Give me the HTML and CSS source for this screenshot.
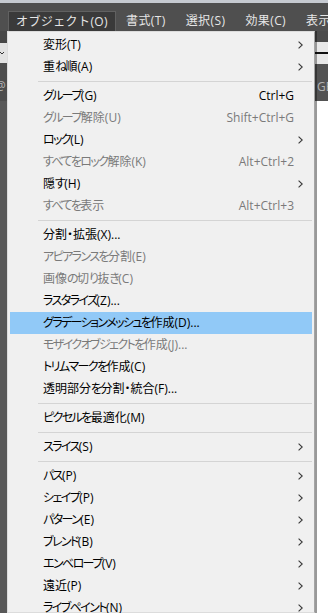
FILE: index.html
```html
<!DOCTYPE html>
<html lang="ja">
<head>
  <meta charset="UTF-8">
  <meta name="viewport" content="width=device-width, initial-scale=1.0">
  <title>オブジェクト メニュー</title>
  <link rel="stylesheet" href="styles.css">
</head>
<body>

  <div class="topline"></div>
  <nav class="menubar">
    <span class="mb-item active">オブジェクト(O)</span>
    <span class="mb-item">書式(T)</span>
    <span class="mb-item">選択(S)</span>
    <span class="mb-item">効果(C)</span>
    <span class="mb-item">表示(V)</span>
  </nav>

  <div class="stage">
    <div class="side side-left">
      <div class="blk dark-a"></div>
      <div class="blk light">
        <svg width="4" height="4" viewBox="0 0 4 4"><polyline points="0,1 2,3 4,1" fill="none" stroke="#333" stroke-width="1"/></svg>
      </div>
      <div class="blk dark-b"><span class="ghost">@</span></div>
      <div class="blk dark-c"></div>
    </div>

    <div class="dropdown">
      <div class="item"><span class="label">変形(T)</span><span class="sub"><svg width="5" height="8" viewBox="0 0 5 8"><polyline points="0.6,0.6 4.2,4 0.6,7.4"/></svg></span></div>
      <div class="item"><span class="label">重<span class="k">ね</span>順(A)</span><span class="sub"><svg width="5" height="8" viewBox="0 0 5 8"><polyline points="0.6,0.6 4.2,4 0.6,7.4"/></svg></span></div>
      <div class="sep"></div>
      <div class="item"><span class="label"><span class="k">グループ</span>(G)</span><span class="key">Ctrl+G</span><span class="sub"></span></div>
      <div class="item off"><span class="label"><span class="k">グループ</span>解除(U)</span><span class="key">Shift+Ctrl+G</span><span class="sub"></span></div>
      <div class="item"><span class="label"><span class="k">ロック</span>(L)</span><span class="sub"><svg width="5" height="8" viewBox="0 0 5 8"><polyline points="0.6,0.6 4.2,4 0.6,7.4"/></svg></span></div>
      <div class="item off"><span class="label"><span class="k">すべてをロック</span>解除(K)</span><span class="key">Alt+Ctrl+2</span><span class="sub"></span></div>
      <div class="item"><span class="label">隠<span class="k">す</span>(H)</span><span class="sub"><svg width="5" height="8" viewBox="0 0 5 8"><polyline points="0.6,0.6 4.2,4 0.6,7.4"/></svg></span></div>
      <div class="item off"><span class="label"><span class="k">すべてを</span>表示</span><span class="key">Alt+Ctrl+3</span><span class="sub"></span></div>
      <div class="sep"></div>
      <div class="item"><span class="label">分割・拡張(X)...</span><span class="sub"></span></div>
      <div class="item off"><span class="label"><span class="k">アピアランスを</span>分割(E)</span><span class="sub"></span></div>
      <div class="item off"><span class="label">画像<span class="k">の</span>切<span class="k">り</span>抜<span class="k">き</span>(C)</span><span class="sub"></span></div>
      <div class="item"><span class="label"><span class="k">ラスタライズ</span>(Z)...</span><span class="sub"></span></div>
      <div class="item hover"><span class="label"><span class="k">グラデーションメッシュを</span>作成(D)...</span><span class="sub"></span></div>
      <div class="item off"><span class="label"><span class="k">モザイクオブジェクトを</span>作成(J)...</span><span class="sub"></span></div>
      <div class="item"><span class="label"><span class="k">トリムマークを</span>作成(C)</span><span class="sub"></span></div>
      <div class="item"><span class="label">透明部分<span class="k">を</span>分割・統合(F)...</span><span class="sub"></span></div>
      <div class="sep"></div>
      <div class="item"><span class="label"><span class="k">ピクセルを</span>最適化(M)</span><span class="sub"></span></div>
      <div class="sep"></div>
      <div class="item"><span class="label"><span class="k">スライス</span>(S)</span><span class="sub"><svg width="5" height="8" viewBox="0 0 5 8"><polyline points="0.6,0.6 4.2,4 0.6,7.4"/></svg></span></div>
      <div class="sep"></div>
      <div class="item"><span class="label"><span class="k">パス</span>(P)</span><span class="sub"><svg width="5" height="8" viewBox="0 0 5 8"><polyline points="0.6,0.6 4.2,4 0.6,7.4"/></svg></span></div>
      <div class="item"><span class="label"><span class="k">シェイプ</span>(P)</span><span class="sub"><svg width="5" height="8" viewBox="0 0 5 8"><polyline points="0.6,0.6 4.2,4 0.6,7.4"/></svg></span></div>
      <div class="item"><span class="label"><span class="k">パターン</span>(E)</span><span class="sub"><svg width="5" height="8" viewBox="0 0 5 8"><polyline points="0.6,0.6 4.2,4 0.6,7.4"/></svg></span></div>
      <div class="item"><span class="label"><span class="k">ブレンド</span>(B)</span><span class="sub"><svg width="5" height="8" viewBox="0 0 5 8"><polyline points="0.6,0.6 4.2,4 0.6,7.4"/></svg></span></div>
      <div class="item"><span class="label"><span class="k">エンベロープ</span>(V)</span><span class="sub"><svg width="5" height="8" viewBox="0 0 5 8"><polyline points="0.6,0.6 4.2,4 0.6,7.4"/></svg></span></div>
      <div class="item"><span class="label">遠近(P)</span><span class="sub"><svg width="5" height="8" viewBox="0 0 5 8"><polyline points="0.6,0.6 4.2,4 0.6,7.4"/></svg></span></div>
      <div class="item"><span class="label"><span class="k">ライブペイント</span>(N)</span><span class="sub"><svg width="5" height="8" viewBox="0 0 5 8"><polyline points="0.6,0.6 4.2,4 0.6,7.4"/></svg></span></div>
    </div>

    <div class="side side-right">
      <div class="blk dark-a"></div>
      <div class="blk light"></div>
      <div class="blk rule"></div>
      <div class="blk light"></div>
      <div class="blk dark-b"><span class="ghost">GE</span></div>
      <div class="blk paper"></div>
    </div>
  </div>

</body>
</html>
```

FILE: styles.css
```css
html, body {
  margin: 0;
  height: 613px;
  overflow: hidden;
  background: #ffffff;
}
body {
  font-family: "Open Sans", "Noto Sans CJK JP", sans-serif;
  font-size: 12px;
}
.topline {
  height: 3px;
  background: #c6cad1;
}
.menubar {
  height: 28px;
  background: #4f4f4f;
  display: flex;
  align-items: flex-end;
  padding-left: 8px;
  white-space: nowrap;
  overflow: hidden;
  color: #e6e6e6;
  letter-spacing: 0.4px;
}
.mb-item {
  height: 20px;
  line-height: 20px;
  padding: 0 10px;
}
.mb-item.active {
  height: 19px;
  padding: 0 7px;
  background: #3a3a3a;
  border: 1px solid #616161;
  border-bottom: none;
}
.stage {
  display: flex;
  height: 582px;
}
.side {
  display: flex;
  flex-direction: column;
  overflow: hidden;
}
.side-left {
  width: 7px;
}
.side-right {
  flex: 1;
}
.blk {
  flex: none;
}
.side-left .dark-a { height: 12px; background: #474747; }
.side-left .light {
  height: 20px;
  background: #e2e2e2;
  display: flex;
  align-items: center;
}
.side-left .dark-b {
  height: 38px;
  background: #4d4d4d;
  display: flex;
  align-items: center;
  padding-top: 8px;
  box-sizing: border-box;
}
.side-left .dark-c { flex: 1; background: #585858; }
.side-right .blk {
  border-left: 2px solid rgba(0, 0, 0, 0.35);
}
.side-right .dark-a { height: 11px; background: #4b4b4b; }
.side-right .light { height: 10px; background: #e8e8e8; }
.side-right .rule { height: 2px; background: #111111; }
.side-right .dark-b {
  height: 37px;
  background: #535353;
  display: flex;
  align-items: center;
  padding-top: 8px;
  box-sizing: border-box;
}
.side-right .paper { flex: 1; background: #ffffff; border-left-color: rgba(0, 0, 0, 0.4); }
.ghost {
  color: #b4b4b4;
  font-size: 12px;
  line-height: 14px;
}
.side-left .ghost {
  margin-left: -5px;
}
.dropdown {
  width: 308px;
  box-sizing: border-box;
  flex: none;
  background: #f0f0f0;
  border: 1px solid #dcdcdc;
  border-right-color: #a5a5a5;
  padding: 2px;
  font-feature-settings: "palt";
}
.item {
  display: flex;
  align-items: center;
  height: 22px;
  line-height: 22px;
  padding-left: 33px;
  color: #000000;
  white-space: nowrap;
}
.item .label {
  flex: 1;
}
.item .k {
  letter-spacing: -1.6px;
}
.item .sub {
  width: 18px;
  height: 22px;
  display: flex;
  align-items: center;
  padding-left: 4px;
  box-sizing: border-box;
}
.item .sub polyline {
  fill: none;
  stroke: #3a3a3a;
  stroke-width: 1.1;
}
.item.off {
  color: #7a7a7a;
}
.item.hover {
  background: #91c9f7;
}
.sep {
  height: 1px;
  background: #d4d4d4;
  margin: 3px 0 3px 28px;
}
```
